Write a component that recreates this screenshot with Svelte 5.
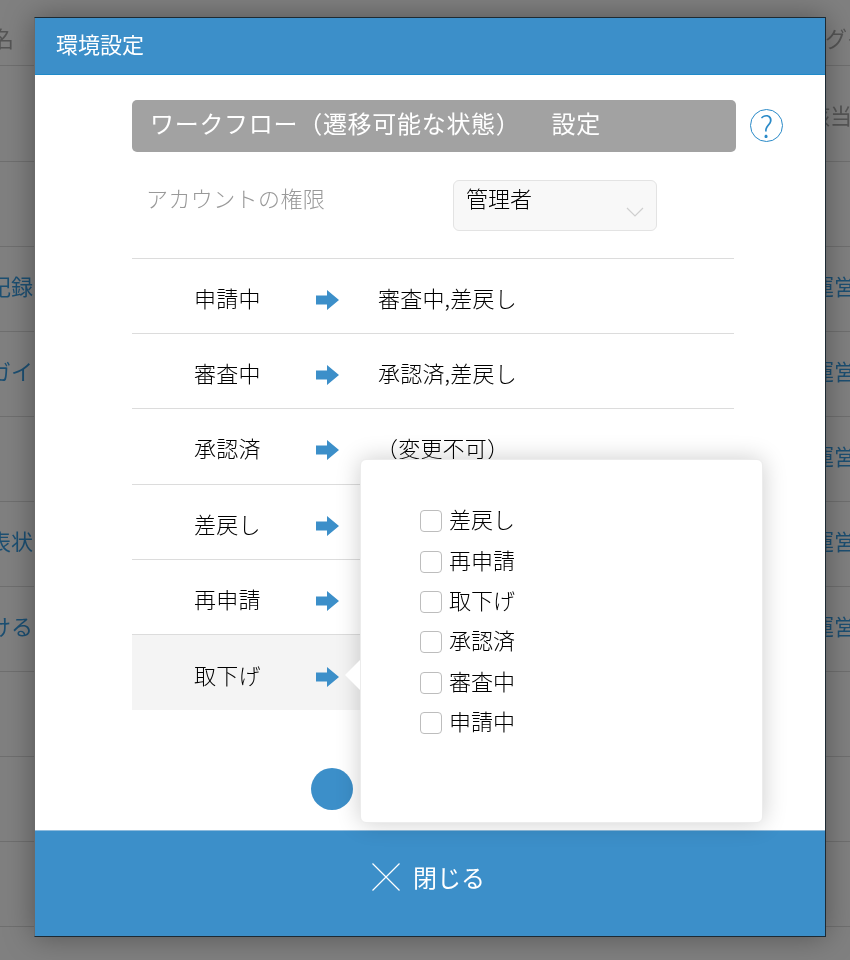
<script lang="ts">
  // background table, only the edges show around the modal
  const bgRows = [
    { left: '', right: '該当', plain: true },
    { left: '', right: '' },
    { left: '記録', right: '運営' },
    { left: 'ガイ', right: '運営' },
    { left: '', right: '運営' },
    { left: '表状', right: '運営' },
    { left: 'ける', right: '運営' },
    { left: '', right: '' },
    { left: '', right: '' },
    { left: '', right: '' }
  ];

  const flows = [
    { state: '申請中', next: '審査中,差戻し' },
    { state: '審査中', next: '承認済,差戻し' },
    { state: '承認済', next: '（変更不可）', fixed: true },
    { state: '差戻し', next: '' },
    { state: '再申請', next: '' },
    { state: '取下げ', next: '', active: true }
  ];

  const options = ['差戻し', '再申請', '取下げ', '承認済', '審査中', '申請中'];
</script>

<div class="page">
  <div class="bg-head">
    <span class="bg-left">名</span>
    <span class="bg-right">ログイン</span>
  </div>
  {#each bgRows as row}
    <div class="bg-row" class:plain={row.plain}>
      <span class="bg-left">{row.left}</span>
      <span class="bg-right">{row.right}</span>
    </div>
  {/each}

  <div class="modal">
    <header class="modal-head">環境設定</header>

    <div class="modal-body">
      <div class="title-row">
        <h2 class="title">ワークフロー（遷移可能な状態）<span class="title-tail">設定</span></h2>
        <span class="help">?</span>
      </div>

      <div class="role-row">
        <span class="role-label">アカウントの権限</span>
        <div class="select">
          管理者
          <svg class="chevron" width="18" height="10" viewBox="0 0 18 10">
            <path d="M1 1l8 8 8-8" fill="none" stroke="#cfcfcf" stroke-width="1.2" />
          </svg>
        </div>
      </div>

      <div class="flows">
        {#each flows as flow}
          <div class="flow" class:active={flow.active}>
            <span class="state">{flow.state}</span>
            <svg class="arrow" width="23" height="20" viewBox="0 0 23 20">
              <path d="M0 5.500h11V0l12 10-12 10v-5.500H0z" fill="#3c8fc9" />
            </svg>
            <span class="next" class:fixed={flow.fixed}>{flow.next}</span>
          </div>
        {/each}
      </div>

      <div class="save-row"><span class="save"></span></div>
    </div>

    <button class="close">
      <svg width="28" height="28" viewBox="0 0 28 28">
        <path d="M0.500 0.500l27 27M27.500 0.500l-27 27" stroke="#fff" stroke-width="1.2" fill="none" />
      </svg>
      <span>閉じる</span>
    </button>

    <div class="popover">
      <span class="tail"></span>
      {#each options as option}
        <label class="option">
          <span class="box"></span>
          {option}
        </label>
      {/each}
    </div>
  </div>
</div>

<style>
  :global(body) {
    margin: 0;
  }

  .page {
    position: relative;
    width: 850px;
    height: 960px;
    overflow: hidden;
    background: #808080;
    font-family: "Noto Sans CJK JP", "Liberation Sans", sans-serif;
    font-weight: 300;
    color: #000;
    /* keeps text antialiasing greyscale */
    will-change: transform;
  }

  .bg-head,
  .bg-row {
    display: flex;
    justify-content: space-between;
    align-items: center;
    box-sizing: border-box;
    font-size: 22px;
    font-weight: 400;
    line-height: 1;
    color: #1c4f72;
    border-bottom: 1px solid #6f6f6f;
  }

  .bg-head {
    height: 66px;
    padding-top: 8px;
    color: #555;
  }

  .bg-row {
    height: 85px;
    padding-bottom: 8px;
  }

  .bg-row.plain {
    height: 96px;
    padding-bottom: 0;
    color: #555;
  }

  .bg-left {
    margin-left: -11px;
  }

  .bg-head .bg-left {
    margin-left: -8px;
  }

  .bg-right {
    width: 38px;
    white-space: nowrap;
  }

  .plain .bg-right {
    width: 42px;
  }

  .bg-head .bg-right {
    width: 47px;
  }

  .modal {
    position: absolute;
    left: 34px;
    top: 17px;
    width: 790px;
    height: 918px;
    display: flex;
    flex-direction: column;
    background: #fff;
    border: 1px solid #1d2a33;
    border-left-color: #6a6a6a;
    box-shadow: 0 0 28px rgba(0, 0, 0, 0.35);
  }

  .modal-head {
    height: 57px;
    flex: none;
    box-sizing: border-box;
    padding-left: 21px;
    background: #3c8fc9;
    border-bottom: 1px solid #1f8ac9;
    color: #fff;
    font-size: 22px;
    font-weight: 400;
    line-height: 51px;
  }

  .modal-body {
    flex: 1;
    padding: 25px 90px 0 97px;
  }

  .title-row {
    position: relative;
    width: 604px;
  }

  .title {
    margin: 0;
    height: 52px;
    padding-left: 18px;
    background: #a2a2a2;
    border-radius: 5px;
    color: #fff;
    font-size: 24px;
    font-weight: 400;
    line-height: 46px;
    letter-spacing: 0.7px;
    white-space: nowrap;
  }

  .title-tail {
    margin-left: 31px;
  }

  .help {
    position: absolute;
    left: 618px;
    top: 9px;
    width: 31px;
    height: 31px;
    border: 1px solid #2a8ac8;
    border-radius: 50%;
    color: #2a8ac8;
    font-size: 30px;
    line-height: 30px;
    text-align: center;
  }

  .role-row {
    display: flex;
    height: 106px;
    box-sizing: border-box;
    padding-top: 28px;
    padding-left: 14px;
  }

  .role-label {
    width: 307px;
    color: #999;
    font-size: 22px;
    line-height: 34px;
    letter-spacing: 0.4px;
    white-space: nowrap;
  }

  .select {
    position: relative;
    width: 204px;
    height: 51px;
    box-sizing: border-box;
    padding-left: 12px;
    background: #f8f8f8;
    border: 1px solid #e3e3e3;
    border-radius: 6px;
    font-size: 22px;
    line-height: 33px;
  }

  .chevron {
    position: absolute;
    right: 12px;
    top: 26px;
  }

  .flows {
    width: 602px;
    border-top: 1px solid #dcdcdc;
  }

  .flow {
    display: flex;
    align-items: center;
    height: 75.2px;
    box-sizing: border-box;
    padding-top: 2px;
    padding-left: 62px;
    border-bottom: 1px solid #dcdcdc;
    font-size: 22px;
    letter-spacing: 0.2px;
  }

  .flow:last-child {
    border-bottom: none;
  }

  .flow.active {
    background: #f4f4f4;
  }

  .state {
    width: 122px;
  }

  .arrow {
    flex: none;
    margin-top: 6px;
    margin-right: 39px;
  }

  .next.fixed {
    margin-left: -2px;
  }

  .save-row {
    display: flex;
    padding-top: 58px;
    padding-left: 179px;
  }

  .save {
    width: 42px;
    height: 42px;
    border-radius: 50%;
    background: #3c8fc9;
  }

  .close {
    height: 106px;
    flex: none;
    display: flex;
    align-items: center;
    justify-content: center;
    gap: 13px;
    padding: 0 3px 14px 0;
    background: #3c8fc9;
    border: none;
    border-top: 1px solid #8fbbdc;
    color: #fff;
    font-family: inherit;
    font-size: 24px;
    font-weight: 400;
  }

  .popover {
    position: absolute;
    left: 325px;
    top: 441px;
    width: 403px;
    height: 364px;
    box-sizing: border-box;
    padding-top: 38px;
    padding-left: 59px;
    background: #fff;
    border: 1px solid #ececec;
    border-radius: 6px;
    box-shadow: 0 0 24px rgba(0, 0, 0, 0.2);
  }

  .tail {
    position: absolute;
    left: -16px;
    top: 200px;
    width: 0;
    height: 0;
    border-top: 15px solid transparent;
    border-bottom: 15px solid transparent;
    border-right: 15px solid #fff;
  }

  .option {
    display: flex;
    align-items: center;
    gap: 7px;
    height: 40.4px;
    font-size: 22px;
  }

  .box {
    width: 20px;
    height: 20px;
    margin-top: 6px;
    background: #fff;
    border: 1.5px solid #bdbdbd;
    border-radius: 4px;
  }
</style>
